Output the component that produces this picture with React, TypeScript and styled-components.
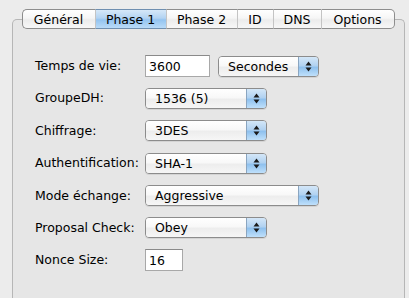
import React from 'react';
import styled, { createGlobalStyle } from 'styled-components';

const GlobalStyle = createGlobalStyle`
  html, body {
    margin: 0;
    padding: 0;
    background: #ececec;
    font-family: "DejaVu Sans", "Liberation Sans", sans-serif;
    font-size: 12.5px;
    color: #000;
  }
`;

// Window body
const Wrapper = styled.div`
  width: 409px;
  height: 298px;
  overflow: hidden;
  padding: 9px 4px 0 12px;
  box-sizing: border-box;
`;

const TabBar = styled.div`
  display: flex;
  justify-content: center;
  position: relative;
  z-index: 1;
  margin-bottom: -10px;
  padding-right: 1px;
`;

const Tab = styled.div<{ $width: number; $active?: boolean; $first?: boolean; $last?: boolean }>`
  width: ${p => p.$width}px;
  height: 20px;
  box-sizing: border-box;
  display: flex;
  align-items: center;
  justify-content: center;
  font-size: 12.5px;
  border-top: 1px solid #8d8d8d;
  border-bottom: 1px solid #8d8d8d;
  border-left: ${p => (p.$first ? '1px solid #8d8d8d' : '1px solid #c4c4c4')};
  border-right: ${p => (p.$last ? '1px solid #8d8d8d' : 'none')};
  border-radius: ${p => (p.$first ? '5px 0 0 5px' : p.$last ? '0 5px 5px 0' : '0')};
  background: ${p =>
    p.$active
      ? 'linear-gradient(#d6e8f8 0%, #b3d3f2 45%, #94c4f0 55%, #b9dbf8 100%)'
      : 'linear-gradient(#ffffff 0%, #f6f6f6 45%, #ececec 55%, #f7f7f7 100%)'};
  ${p => p.$active && 'border-top-color: #6f8fb0; border-bottom-color: #6f8fb0;'}
`;

const Panel = styled.div`
  height: 300px;
  border: 1px solid #b6b6b6;
  border-bottom: none;
  border-radius: 5px 5px 0 0;
  background: #e6e6e6;
  box-sizing: border-box;
  padding: 35px 0 0 22px;
`;

const Form = styled.div`
  display: grid;
  grid-template-columns: 110px auto;
  row-gap: 10.4px;
  align-items: center;
`;

const Label = styled.div`
  height: 22px;
  line-height: 22px;
`;

const Controls = styled.div`
  display: flex;
  align-items: center;
  gap: 8px;
`;

const TextField = styled.div<{ $width: number }>`
  width: ${p => p.$width}px;
  height: 22px;
  box-sizing: border-box;
  background: #fff;
  border: 1px solid #a8a8a8;
  border-top-color: #8a8a8a;
  padding-left: 3px;
  display: flex;
  align-items: center;
`;

const Popup = styled.div<{ $width: number }>`
  width: ${p => p.$width}px;
  height: 21px;
  box-sizing: border-box;
  border: 1px solid #8c8c8c;
  border-radius: 4px;
  display: flex;
  overflow: hidden;
  box-shadow: 0 1px 0 rgba(0, 0, 0, 0.08);
`;

const PopupText = styled.div`
  flex: 1;
  display: flex;
  align-items: center;
  padding-left: 9px;
  background: linear-gradient(#ffffff 0%, #f8f8f8 45%, #ededed 55%, #f6f6f6 100%);
`;

const PopupArrows = styled.div`
  width: 19px;
  border-left: 1px solid #8aa5c0;
  background: linear-gradient(#d4e7f8 0%, #b1d2f1 45%, #8fc1ee 55%, #bfe0fb 100%);
  display: flex;
  align-items: center;
  justify-content: center;
`;

const Arrows = () => (
  <svg width="7" height="11" viewBox="0 0 7 11">
    <path d="M3.5 0.5 L6.5 4.5 L0.5 4.5 Z" fill="#1a1a1a" />
    <path d="M3.5 10.5 L6.5 6.5 L0.5 6.5 Z" fill="#1a1a1a" />
  </svg>
);

const PopupButton: React.FC<{ value: string; width: number }> = ({ value, width }) => (
  <Popup $width={width}>
    <PopupText>{value}</PopupText>
    <PopupArrows>
      <Arrows />
    </PopupArrows>
  </Popup>
);

const tabs = [
  { name: 'Général', width: 73 },
  { name: 'Phase 1', width: 71, active: true },
  { name: 'Phase 2', width: 71 },
  { name: 'ID', width: 36 },
  { name: 'DNS', width: 48 },
  { name: 'Options', width: 74 },
];

const App: React.FC = () => (
  <>
    <GlobalStyle />
    <Wrapper>
      <TabBar>
        {tabs.map((t, i) => (
          <Tab
            key={t.name}
            $width={t.width}
            $active={t.active}
            $first={i === 0}
            $last={i === tabs.length - 1}
          >
            {t.name}
          </Tab>
        ))}
      </TabBar>
      <Panel>
        <Form>
          <Label>Temps de vie:</Label>
          <Controls>
            <TextField $width={65}>3600</TextField>
            <PopupButton value="Secondes" width={101} />
          </Controls>

          <Label>GroupeDH:</Label>
          <PopupButton value="1536 (5)" width={122} />

          <Label>Chiffrage:</Label>
          <PopupButton value="3DES" width={122} />

          <Label>Authentification:</Label>
          <PopupButton value="SHA-1" width={122} />

          <Label>Mode échange:</Label>
          <PopupButton value="Aggressive" width={174} />

          <Label>Proposal Check:</Label>
          <PopupButton value="Obey" width={122} />

          <Label>Nonce Size:</Label>
          <Controls>
            <TextField $width={38}>16</TextField>
          </Controls>
        </Form>
      </Panel>
    </Wrapper>
  </>
);

export default App;
